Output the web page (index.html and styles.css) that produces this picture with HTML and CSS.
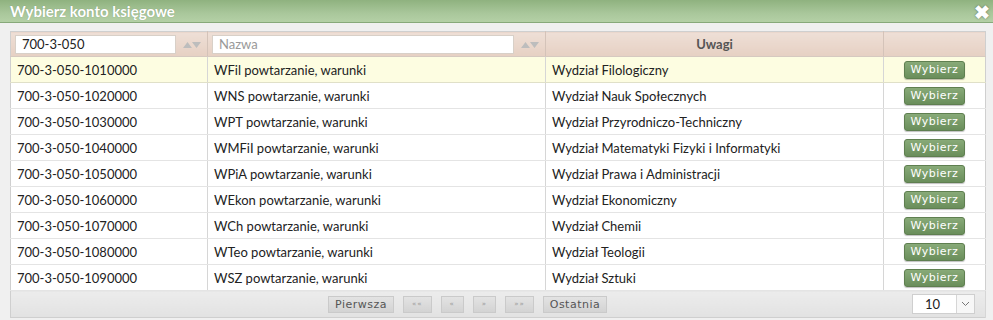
FILE: index.html
```html
<!DOCTYPE html>
<html lang="pl">
<head>
    <meta charset="UTF-8">
    <title>Wybierz konto księgowe</title>
    <link rel="stylesheet" href="styles.css">
</head>
<body>
    <div class="dialog">
        <div class="titlebar">
            <span class="title">Wybierz konto księgowe</span>
            <span class="close">&#x2716;</span>
        </div>
        <div class="dialog-body">
            <table class="grid">
                <thead>
                    <tr>
                        <th class="c1"><div class="filter"><input type="text" value="700-3-050"><svg class="sort" width="18" height="7" viewBox="0 0 18 7"><path d="M0 7 L4.5 1 L9 7 Z M9 1 L18 1 L13.5 7 Z" fill="#bdbdbd"/></svg></div></th>
                        <th class="c2"><div class="filter"><input type="text" placeholder="Nazwa"><svg class="sort" width="18" height="7" viewBox="0 0 18 7"><path d="M0 7 L4.5 1 L9 7 Z M9 1 L18 1 L13.5 7 Z" fill="#bdbdbd"/></svg></div></th>
                        <th class="c3">Uwagi</th>
                        <th class="c4"></th>
                    </tr>
                </thead>
                <tbody>
                    <tr class="hover"><td>700-3-050-1010000</td><td>WFil powtarzanie, warunki</td><td>Wydział Filologiczny</td><td class="act"><button class="pick">Wybierz</button></td></tr>
                    <tr><td>700-3-050-1020000</td><td>WNS powtarzanie, warunki</td><td>Wydział Nauk Społecznych</td><td class="act"><button class="pick">Wybierz</button></td></tr>
                    <tr><td>700-3-050-1030000</td><td>WPT powtarzanie, warunki</td><td>Wydział Przyrodniczo-Techniczny</td><td class="act"><button class="pick">Wybierz</button></td></tr>
                    <tr><td>700-3-050-1040000</td><td>WMFiI powtarzanie, warunki</td><td>Wydział Matematyki Fizyki i Informatyki</td><td class="act"><button class="pick">Wybierz</button></td></tr>
                    <tr><td>700-3-050-1050000</td><td>WPiA powtarzanie, warunki</td><td>Wydział Prawa i Administracji</td><td class="act"><button class="pick">Wybierz</button></td></tr>
                    <tr><td>700-3-050-1060000</td><td>WEkon powtarzanie, warunki</td><td>Wydział Ekonomiczny</td><td class="act"><button class="pick">Wybierz</button></td></tr>
                    <tr><td>700-3-050-1070000</td><td>WCh powtarzanie, warunki</td><td>Wydział Chemii</td><td class="act"><button class="pick">Wybierz</button></td></tr>
                    <tr><td>700-3-050-1080000</td><td>WTeo powtarzanie, warunki</td><td>Wydział Teologii</td><td class="act"><button class="pick">Wybierz</button></td></tr>
                    <tr><td>700-3-050-1090000</td><td>WSZ powtarzanie, warunki</td><td>Wydział Sztuki</td><td class="act"><button class="pick">Wybierz</button></td></tr>
                </tbody>
                <tfoot>
                    <tr>
                        <td colspan="4">
                            <div class="pager">
                                <div class="pages">
                                    <button class="pg">Pierwsza</button>
                                    <button class="pg small">&laquo;&laquo;</button>
                                    <button class="pg small">&laquo;</button>
                                    <button class="pg small">&raquo;</button>
                                    <button class="pg small">&raquo;&raquo;</button>
                                    <button class="pg">Ostatnia</button>
                                </div>
                                <div class="size"><span class="size-val">10</span><span class="size-arrow"><svg width="9" height="6" viewBox="0 0 9 6"><path d="M1 1 L4.5 4.5 L8 1" fill="none" stroke="#777" stroke-width="1"/></svg></span></div>
                            </div>
                        </td>
                    </tr>
                </tfoot>
            </table>
        </div>
    </div>
</body>
</html>
```

FILE: styles.css
```css
body {
    margin: 0;
    padding: 0;
    font-family: Lato, "Open Sans", sans-serif;
    background-color: #efefef;
}
.dialog {
    width: 993px;
    height: 320px;
    overflow: hidden;
    background: #f0f0f0;
}
.titlebar {
    height: 22px;
    display: flex;
    justify-content: space-between;
    align-items: center;
    padding: 0 3px 0 10px;
    background: linear-gradient(to bottom, #8fb27f, #a9c79b 60%, #b4d0a6);
    border-bottom: 1px solid #87a97a;
}
.title {
    color: #fff;
    font-weight: bold;
    font-size: 15px;
    text-shadow: 0 0 1px rgba(0, 0, 0, 0.25);
}
.close {
    color: #fff;
    font-size: 19px;
    line-height: 19px;
    font-weight: bold;
    text-shadow: 0 0 2px rgba(0, 0, 0, 0.5);
}
.dialog-body {
    padding: 8px 7px 0 10px;
}
.grid {
    width: 976px;
    border-collapse: collapse;
    table-layout: fixed;
    font-size: 13px;
    color: #222;
    border: 1px solid #cfcfcf;
}
.grid th {
    height: 24px;
    padding: 0;
    background: linear-gradient(to bottom, #eedfd6, #e6d0c3);
    border-right: 1px solid #d4c3b9;
    border-bottom: 1px solid #d6c9c0;
    font-weight: bold;
    color: #555;
}
.grid .c1 { width: 196px; }
.grid .c2 { width: 337px; }
.grid .c3 { width: 337px; }
.grid .c4 { border-right: none; }
.filter {
    display: flex;
    align-items: center;
    padding: 0 6px 0 4px;
}
.filter input {
    flex: 1;
    min-width: 0;
    height: 17px;
    padding: 0 6px;
    border: 1px solid #d8d0c8;
    background: #fff;
    font-family: Lato, sans-serif;
    font-size: 13px;
    color: #222;
    outline: none;
}
.filter input::placeholder {
    color: #999;
}
.sort {
    margin-left: 7px;
    flex: none;
}
.grid td {
    height: 25px;
    padding: 0 0 0 6px;
    background: #fff;
    border-right: 1px solid #d6d6d6;
    border-bottom: 1px solid #e4e4e4;
    white-space: nowrap;
}
.grid tr.hover td {
    background: #fdfde1;
    border-bottom-color: #e0e0c8;
}
.grid td.act {
    text-align: center;
    padding: 0;
    border-right: none;
}
.pick {
    height: 18px;
    padding: 0 6px;
    border: 1px solid #5f7f50;
    border-radius: 3px;
    background: linear-gradient(to bottom, #88aa78, #6a8e5b);
    color: #fff;
    font-family: "DejaVu Sans", sans-serif;
    font-size: 11px;
    letter-spacing: 0.5px;
    box-shadow: 0 1px 1px rgba(0, 0, 0, 0.25);
    cursor: pointer;
}
.grid tfoot td {
    height: 26px;
    padding: 0;
    background: linear-gradient(to bottom, #ececec, #e2e2e2);
    border-bottom: none;
}
.pager {
    display: flex;
    align-items: center;
    padding: 0 10px 0 317px;
}
.pages {
    display: flex;
    gap: 9px;
    flex: 1;
}
.pg {
    height: 17px;
    padding: 0 6px;
    border: 1px solid #cacaca;
    background: linear-gradient(to bottom, #e3e3e3, #d3d3d3);
    color: #555;
    font-family: "DejaVu Sans", sans-serif;
    font-size: 11px;
    letter-spacing: 0.5px;
    cursor: pointer;
}
.pg.small {
    font-size: 7px;
    color: #999;
    padding: 0 8px;
    letter-spacing: 1px;
}
.size {
    display: flex;
    height: 18px;
    border: 1px solid #cfcfcf;
    background: #fff;
}
.size-val {
    width: 43px;
    padding-left: 12px;
    line-height: 18px;
    font-size: 13px;
    color: #222;
    box-sizing: border-box;
}
.size-arrow {
    width: 17px;
    display: flex;
    align-items: center;
    justify-content: center;
    border-left: 1px solid #d6d6d6;
    background: #f7f7f7;
}
```
